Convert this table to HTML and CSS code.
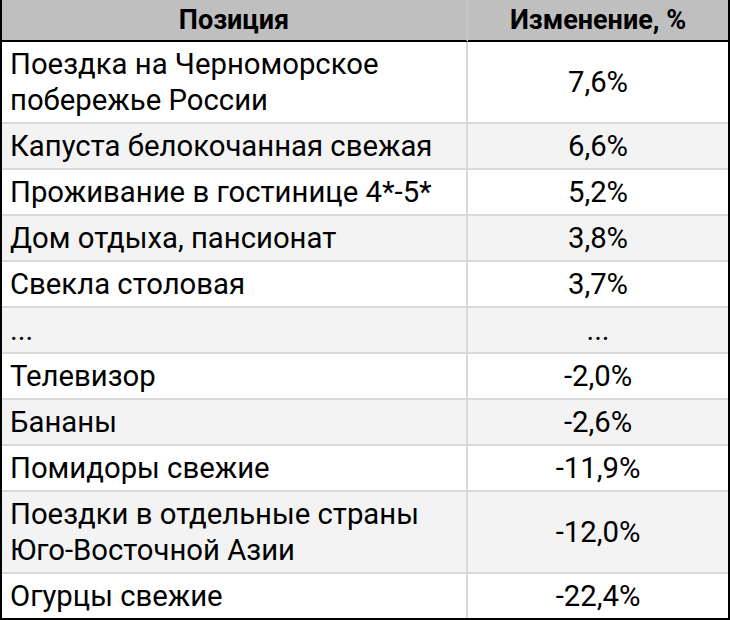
FILE: index.html
```html
<!DOCTYPE html>
<html lang="ru">
<head>
<meta charset="utf-8">
<title>Изменение цен</title>
<link rel="stylesheet" href="styles.css">
</head>
<body>
<table class="tbl">
  <thead>
    <tr><th class="c-name">Позиция</th><th class="c-val">Изменение, %</th></tr>
  </thead>
  <tbody>
    <tr><td class="c-name">Поездка на Черноморское<br>побережье России</td><td class="c-val">7,6%</td></tr>
    <tr><td class="c-name">Капуста белокочанная свежая</td><td class="c-val">6,6%</td></tr>
    <tr><td class="c-name">Проживание в гостинице 4*-5*</td><td class="c-val">5,2%</td></tr>
    <tr><td class="c-name">Дом отдыха, пансионат</td><td class="c-val">3,8%</td></tr>
    <tr><td class="c-name">Свекла столовая</td><td class="c-val">3,7%</td></tr>
    <tr><td class="c-name">...</td><td class="c-val">...</td></tr>
    <tr><td class="c-name">Телевизор</td><td class="c-val">-2,0%</td></tr>
    <tr><td class="c-name">Бананы</td><td class="c-val">-2,6%</td></tr>
    <tr><td class="c-name">Помидоры свежие</td><td class="c-val">-11,9%</td></tr>
    <tr><td class="c-name">Поездки в отдельные страны<br>Юго-Восточной Азии</td><td class="c-val">-12,0%</td></tr>
    <tr><td class="c-name">Огурцы свежие</td><td class="c-val">-22,4%</td></tr>
  </tbody>
</table>
</body>
</html>
```

FILE: styles.css
```css
html, body {
  margin: 0;
  padding: 0;
  background: #ffffff;
}

.tbl {
  width: 730px;
  border-collapse: separate;
  border-spacing: 0;
  border-left: 2px solid #000;
  border-right: 2px solid #000;
  border-bottom: 2px solid #000;
  font-family: Roboto, "Liberation Sans", sans-serif;
  color: #000;
  table-layout: fixed;
}

.tbl th {
  background: #bfbfbf;
  font-size: 27px;
  font-weight: 700;
  line-height: 32px;
  padding: 4px 8px;
  text-align: center;
  border-bottom: 2px solid #000;
}

.tbl th.c-name {
  width: 448px;
  border-right: 2px solid #c6c6c6;
}

.tbl td {
  font-size: 29.3px;
  line-height: 36px;
  padding: 4px 8px;
  border-bottom: 2px solid #d9d9d9;
  vertical-align: middle;
}

.tbl td.c-name {
  text-align: left;
  border-right: 2px solid #d9d9d9;
}

.tbl td.c-val {
  text-align: center;
}

.tbl tbody tr:nth-child(even) td {
  background: #f3f3f3;
}

.tbl tbody tr:last-child td {
  border-bottom: none;
}
```
